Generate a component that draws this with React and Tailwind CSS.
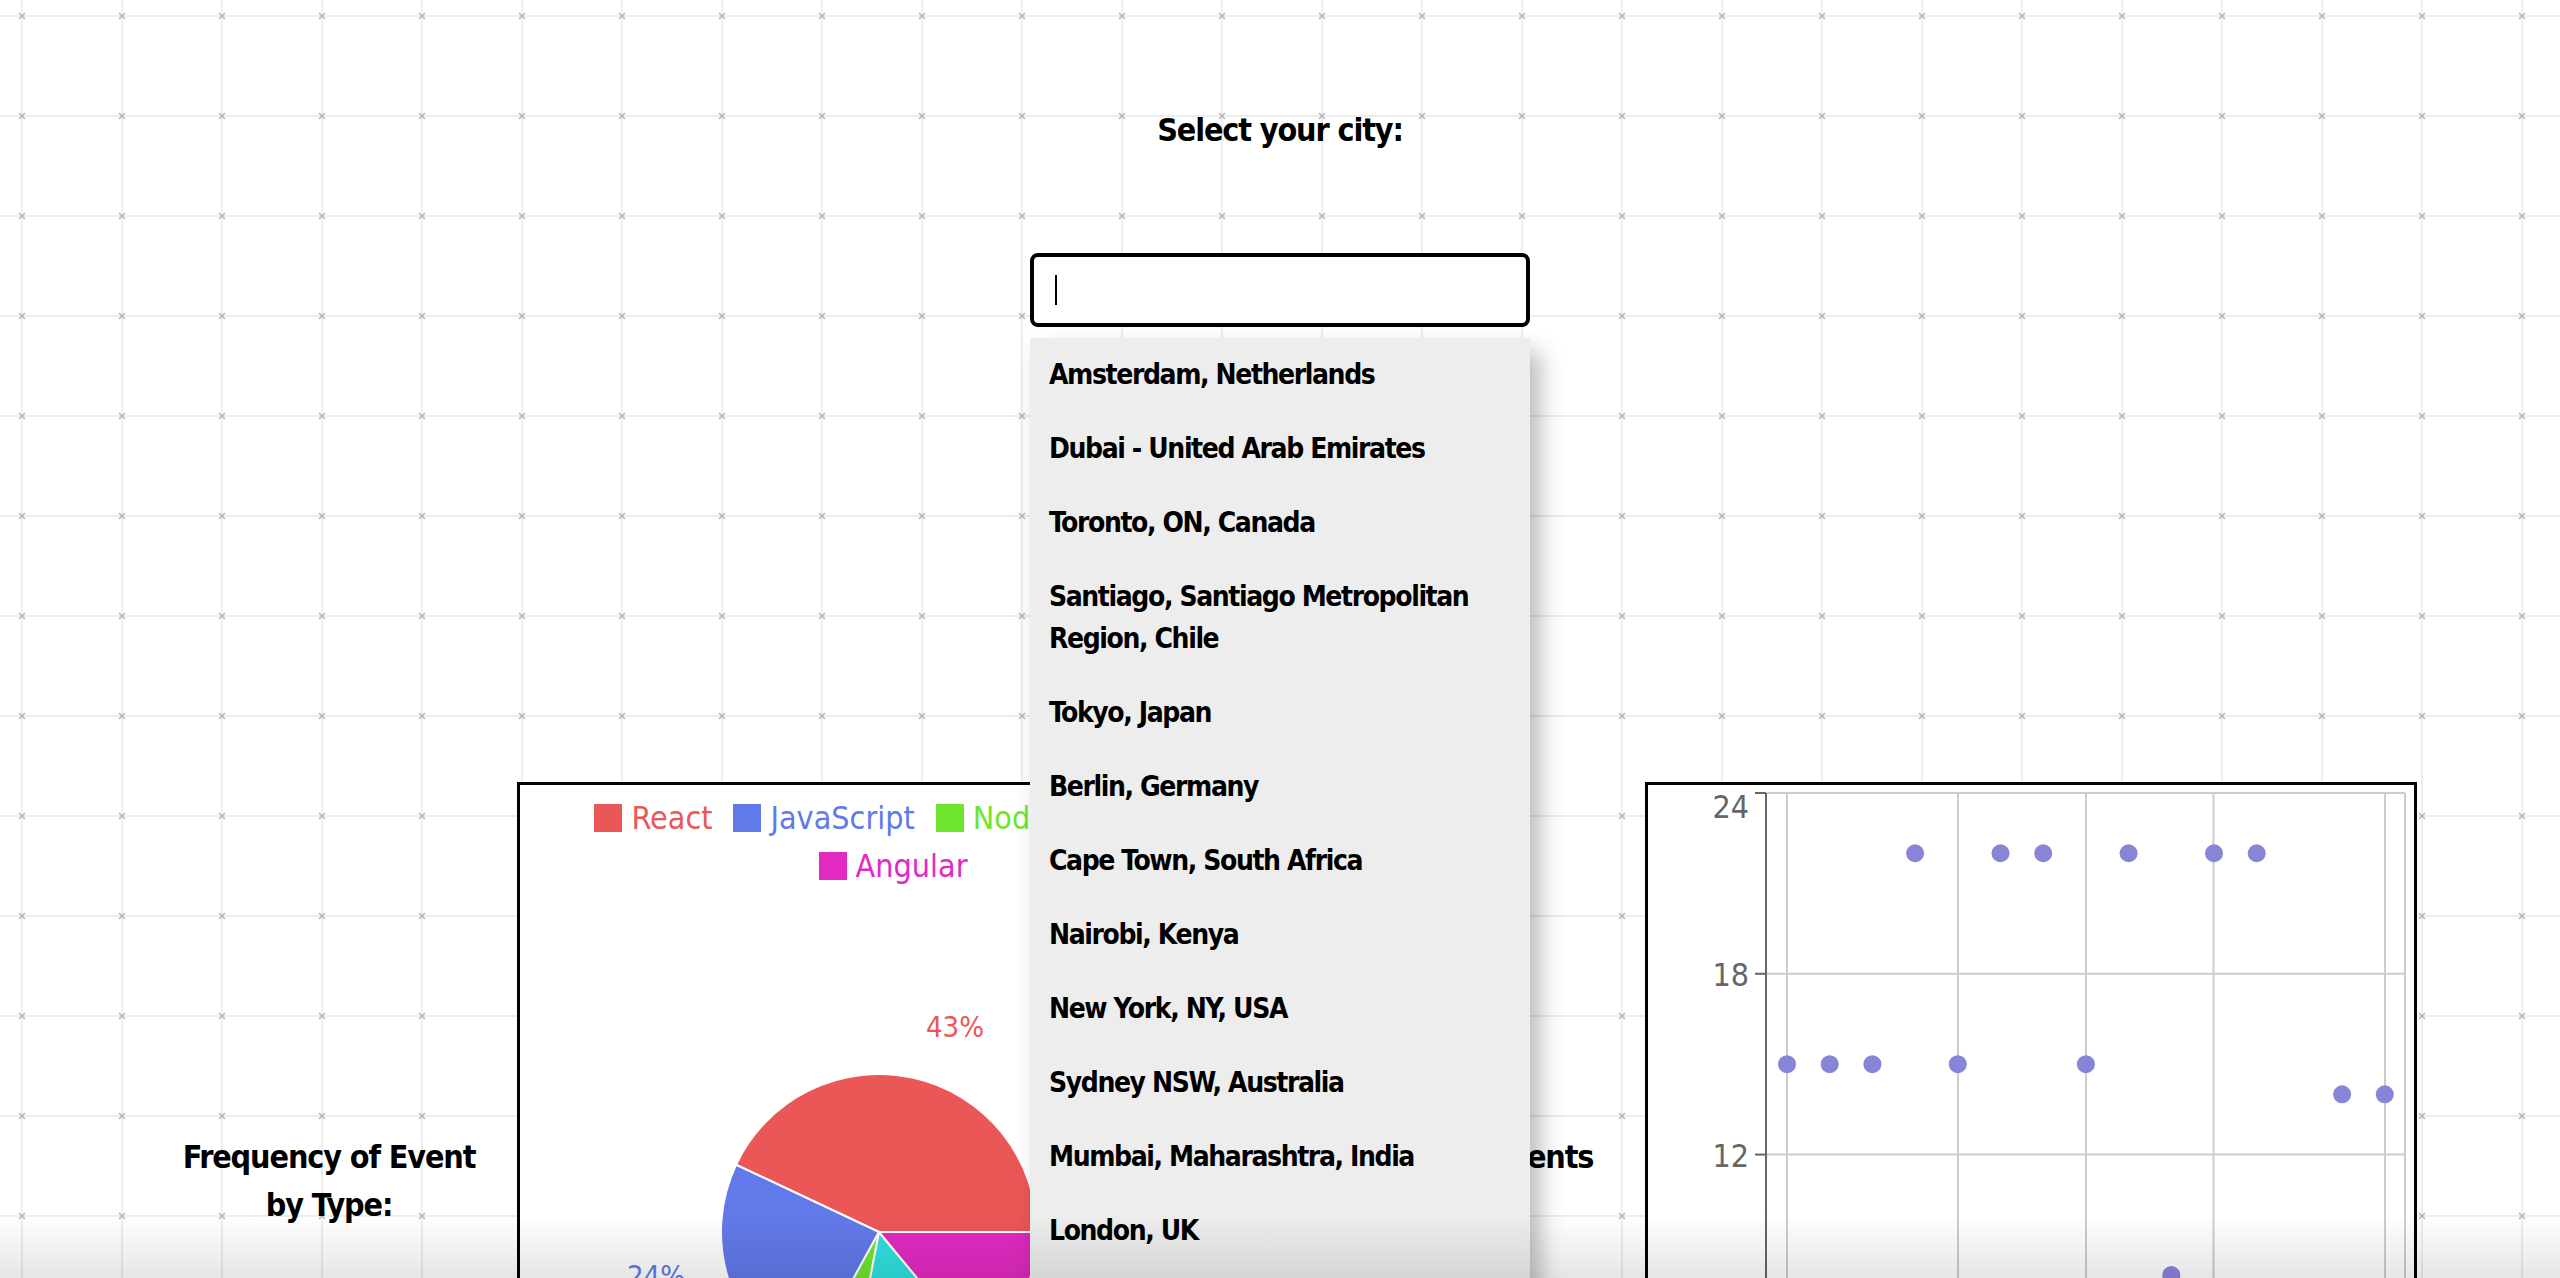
import React from "react";

const cities = [
  "Amsterdam, Netherlands",
  "Dubai - United Arab Emirates",
  "Toronto, ON, Canada",
  "Santiago, Santiago Metropolitan Region, Chile",
  "Tokyo, Japan",
  "Berlin, Germany",
  "Cape Town, South Africa",
  "Nairobi, Kenya",
  "New York, NY, USA",
  "Sydney NSW, Australia",
  "Mumbai, Maharashtra, India",
  "London, UK",
  "Paris, France",
  "São Paulo, Brazil",
];

const slices = [
  { name: "React", v: 43, c: "#eb5757" },
  { name: "JavaScript", v: 24, c: "#6279e9" },
  { name: "Node.js", v: 5, c: "#6fe52e" },
  { name: "Vue", v: 14, c: "#2fe0df" },
  { name: "Angular", v: 14, c: "#e22ac1" },
];

const points = [15, 15, 15, 22, 15, 22, 22, 15, 22, 8, 22, 22, null, 14, 14];

function GridBackground() {
  return (
    <svg className="absolute inset-0 h-full w-full" aria-hidden="true">
      <defs>
        <pattern id="bggrid" x="-28" y="-34" width="100" height="100" patternUnits="userSpaceOnUse">
          <rect x="49" y="0" width="2" height="100" fill="#ededed" />
          <rect x="0" y="49" width="100" height="2" fill="#ededed" />
          <path d="M47 47 L53 53 M53 47 L47 53" stroke="#b0b0b0" strokeWidth="1.3" />
        </pattern>
      </defs>
      <rect width="100%" height="100%" fill="url(#bggrid)" />
    </svg>
  );
}

function Legend({ items }) {
  return (
    <div className="flex justify-center gap-[21px]">
      {items.map((s) => (
        <div key={s.name} className="flex items-center gap-[9px] text-[32px] leading-[48px]" style={{ color: s.c }}>
          <span className="inline-block h-[28px] w-[28px]" style={{ backgroundColor: s.c }} />
          <span>{s.name}</span>
        </div>
      ))}
    </div>
  );
}

function PieCard() {
  const cx = 359;
  const cy = 447;
  const r = 158;
  let acc = 0;
  const pt = (deg) => {
    const a = (deg * Math.PI) / 180;
    return [cx + r * Math.cos(a), cy - r * Math.sin(a)];
  };
  const paths = slices.map((s) => {
    const a0 = (acc / 100) * 360;
    acc += s.v;
    const a1 = (acc / 100) * 360;
    const [x0, y0] = pt(a0);
    const [x1, y1] = pt(a1);
    const large = a1 - a0 > 180 ? 1 : 0;
    return { d: `M${cx} ${cy} L${x0} ${y0} A${r} ${r} 0 ${large} 0 ${x1} ${y1} Z`, c: s.c, key: s.name };
  });
  return (
    <div className="relative h-[798px] w-[752px] shrink-0 border-[3px] border-black bg-white">
      <svg className="absolute inset-0 h-full w-full">
        {paths.map((p) => (
          <path key={p.key} d={p.d} fill={p.c} stroke="#ffffff" strokeWidth="2" />
        ))}
        <text x="406" y="252" fill="#eb5757" fontSize="29" textAnchor="start">43%</text>
        <text x="165" y="501" fill="#6279e9" fontSize="29" textAnchor="end">24%</text>
      </svg>
      <div className="relative flex flex-col pt-[9px]">
        <Legend items={slices.slice(0, 4)} />
        <Legend items={slices.slice(4)} />
      </div>
    </div>
  );
}

function ScatterCard() {
  const y = (v) => 8 + (24 - v) * 30.13;
  const vgrid = [139, 310, 438, 565.5, 737, 757];
  const ticks = [
    { v: 24, by: 33 },
    { v: 18, by: 200.5 },
    { v: 12, by: 381.5 },
    { v: 6, by: 562 },
    { v: 0, by: 742 },
  ];
  return (
    <div className="relative h-[798px] w-[772px] shrink-0 border-[3px] border-black bg-white">
      <svg className="absolute inset-0 h-full w-full">
        {ticks.map((t) => (
          <line key={"h" + t.v} x1="119" x2="757" y1={y(t.v)} y2={y(t.v)} stroke="#cccccc" strokeWidth="2" />
        ))}
        {vgrid.map((gx) => (
          <line key={"v" + gx} x1={gx} x2={gx} y1="8" y2={y(0)} stroke="#cccccc" strokeWidth="2" />
        ))}
        <line x1="118" x2="118" y1="8" y2={y(0)} stroke="#666666" strokeWidth="2" />
        {ticks.map((t) => (
          <g key={"t" + t.v}>
            <line x1="107" x2="118" y1={y(t.v)} y2={y(t.v)} stroke="#666666" strokeWidth="2" />
            <text x="101" y={t.by} fill="#666666" fontSize="32" textAnchor="end">{t.v}</text>
          </g>
        ))}
        {points.map((v, i) =>
          v === null ? null : <circle key={i} cx={139 + 42.7 * i} cy={y(v)} r="9" fill="#8884d8" />
        )}
      </svg>
    </div>
  );
}

export default function App() {
  return (
    <div className="relative h-[1278px] w-full overflow-hidden bg-white font-['DejaVu_Sans_Condensed','DejaVu_Sans',sans-serif] font-stretch-condensed text-black">
      <GridBackground />
      <div className="relative flex flex-col items-center">
        <h2 className="mt-[106px] text-[32px] font-bold leading-[48px] tracking-[-0.035em]">Select your city:</h2>
        <div className="relative z-20 mt-[99px] w-[500px]">
          <div className="flex h-[74px] items-center rounded-[8px] border-4 border-black bg-white pl-[21px]">
            <span className="inline-block h-[30px] w-[2px] bg-black" />
          </div>
          <ul className="absolute left-0 top-[85px] w-[500px] bg-[#ededed] shadow-[10px_14px_22px_rgba(0,0,0,0.28)]">
            {cities.map((c) => (
              <li key={c} className="px-[19px] py-4 text-[28px] font-bold leading-[42px] tracking-[-0.05em]">
                {c}
              </li>
            ))}
          </ul>
        </div>
        <div className="mt-[455px] flex items-center self-start pl-[179px]">
          <div className="w-[300px] text-center text-[32px] font-bold leading-[48px] tracking-[-0.035em]">
            Frequency of Event by Type:
          </div>
          <div className="ml-[38px]">
            <PieCard />
          </div>
          <div className="ml-[38px] w-[300px] text-center text-[32px] font-bold leading-[48px] tracking-[-0.035em]">
            Number of Events by Date:
          </div>
          <div className="ml-[38px]">
            <ScatterCard />
          </div>
        </div>
      </div>
      <div className="pointer-events-none absolute inset-x-0 bottom-0 z-30 h-[64px] bg-linear-to-b from-transparent to-black/10" />
    </div>
  );
}
